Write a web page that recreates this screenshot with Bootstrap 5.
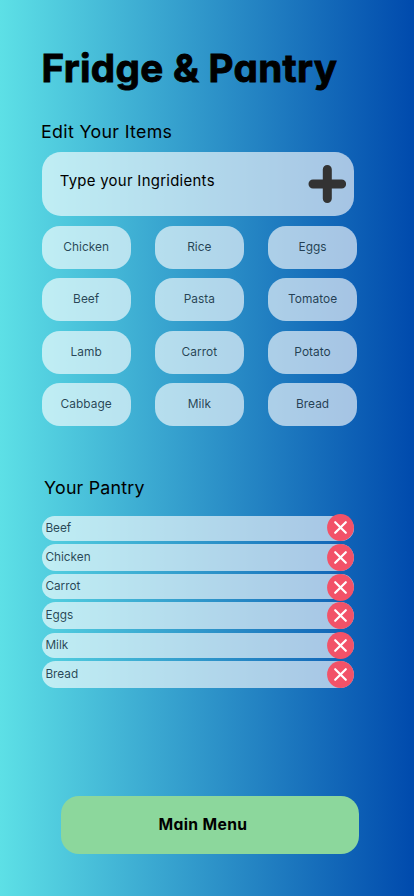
<!DOCTYPE html>
<html lang="en">
<head>
<meta charset="utf-8">
<meta name="viewport" content="width=device-width, initial-scale=1">
<title>Fridge &amp; Pantry</title>
<link href="https://cdn.jsdelivr.net/npm/bootstrap@5.3.0/dist/css/bootstrap.min.css" rel="stylesheet">
<style>
body{font-family:Inter,"Open Sans",sans-serif;color:#000;background:linear-gradient(90deg,#5de0e6,#004aad)}
.screen{width:414px;height:896px;padding:46px 55px 42px 41.7px}
.single-a{font-feature-settings:"cv11" 1}
.page-title{font-size:38.6px;line-height:45px;font-weight:700;letter-spacing:.32px;margin-left:-.2px;-webkit-text-stroke:.9px #000}
.section-title{font-size:17.8px;line-height:24px;font-weight:400;letter-spacing:.22px}
.edit-title{margin:29px 0 0 -.6px;letter-spacing:.33px}
.glass{background:rgba(255,255,255,.63)}
.entry{width:312px;height:64px;margin-top:8px;border-radius:19px;padding:0 8px 0 18px}
.entry input{font-size:14.9px;height:24px;margin-top:-6px;color:#000;letter-spacing:.3px}
.entry input::placeholder{color:#000;opacity:1}
.choices{display:grid;grid-template-columns:repeat(3,89px);column-gap:24.2px;row-gap:9.4px;margin-top:10px}
.choice{height:43px;border:0;border-radius:18px;font-size:11.9px;line-height:15px;padding:0 0 2px;letter-spacing:.05px;color:rgba(0,25,45,.8)}
.pantry-title{margin:50px 0 0 2.4px}
.pantry{width:312px;margin-top:16px}
.stock{height:30.3px}
.stock:nth-child(odd){height:28px}
.stock-bar{height:27px;border-radius:13.5px;padding-left:3.7px;font-size:11.8px;line-height:15px;letter-spacing:0;color:rgba(0,25,45,.8)}
.stock:nth-child(odd) .stock-bar{height:25px;border-radius:12.5px}
.stock-bar span{flex:1}
.remove{width:27px;height:27px;flex:none}
.stock:first-child .remove{margin-top:-2px}
.stock:nth-child(3) .remove{margin-top:2px}
.menu-btn{width:298px;height:58px;margin-left:19.3px;border-radius:18px;background:#8cd79c;font-size:15.7px;font-weight:700;letter-spacing:.35px;padding:0 14px 0 0;border:0}
</style>
</head>
<body>
<main class="screen d-flex flex-column">
  <h1 class="page-title single-a mb-0 text-nowrap">Fridge &amp; Pantry</h1>
  <h2 class="section-title edit-title">Edit Your Items</h2>
  <div class="entry glass d-flex align-items-center">
    <input class="single-a form-control border-0 bg-transparent p-0 shadow-none" placeholder="Type your Ingridients" aria-label="Ingredient">
    <svg width="38" height="40" viewBox="0 0 38 40" class="flex-shrink-0" aria-hidden="true"><path d="M19.3 5.4v29.2M5 20h28.6" stroke="#333" stroke-width="9" stroke-linecap="round"/></svg>
  </div>
  <div class="choices">
    <button class="choice glass">Chicken</button><button class="choice glass">Rice</button><button class="choice glass">Eggs</button>
    <button class="choice glass">Beef</button><button class="choice glass">Pasta</button><button class="choice glass">Tomatoe</button>
    <button class="choice glass">Lamb</button><button class="choice glass">Carrot</button><button class="choice glass">Potato</button>
    <button class="choice glass">Cabbage</button><button class="choice glass">Milk</button><button class="choice glass">Bread</button>
  </div>
  <h2 class="section-title pantry-title">Your Pantry</h2>
  <svg width="0" height="0" class="d-none"><symbol id="cross" viewBox="0 0 27 27"><circle cx="13.5" cy="13.5" r="13.4" fill="#f25268"/><path d="M8.2 8.2l10.6 10.6m0-10.6l-10.6 10.6" stroke="#fff" stroke-width="2.2" stroke-linecap="round"/></symbol></svg>
  <ul class="pantry list-unstyled mb-0">
    <li class="stock"><div class="stock-bar glass d-flex align-items-center"><span>Beef</span><svg class="remove"><use href="#cross"/></svg></div></li>
    <li class="stock"><div class="stock-bar glass d-flex align-items-center"><span>Chicken</span><svg class="remove"><use href="#cross"/></svg></div></li>
    <li class="stock"><div class="stock-bar glass d-flex align-items-center"><span>Carrot</span><svg class="remove"><use href="#cross"/></svg></div></li>
    <li class="stock"><div class="stock-bar glass d-flex align-items-center"><span>Eggs</span><svg class="remove"><use href="#cross"/></svg></div></li>
    <li class="stock"><div class="stock-bar glass d-flex align-items-center"><span>Milk</span><svg class="remove"><use href="#cross"/></svg></div></li>
    <li class="stock"><div class="stock-bar glass d-flex align-items-center"><span>Bread</span><svg class="remove"><use href="#cross"/></svg></div></li>
  </ul>
  <button class="menu-btn single-a mt-auto">Main Menu</button>
</main>
<script src="https://cdn.jsdelivr.net/npm/bootstrap@5.3.0/dist/js/bootstrap.bundle.min.js"></script>
</body>
</html>
